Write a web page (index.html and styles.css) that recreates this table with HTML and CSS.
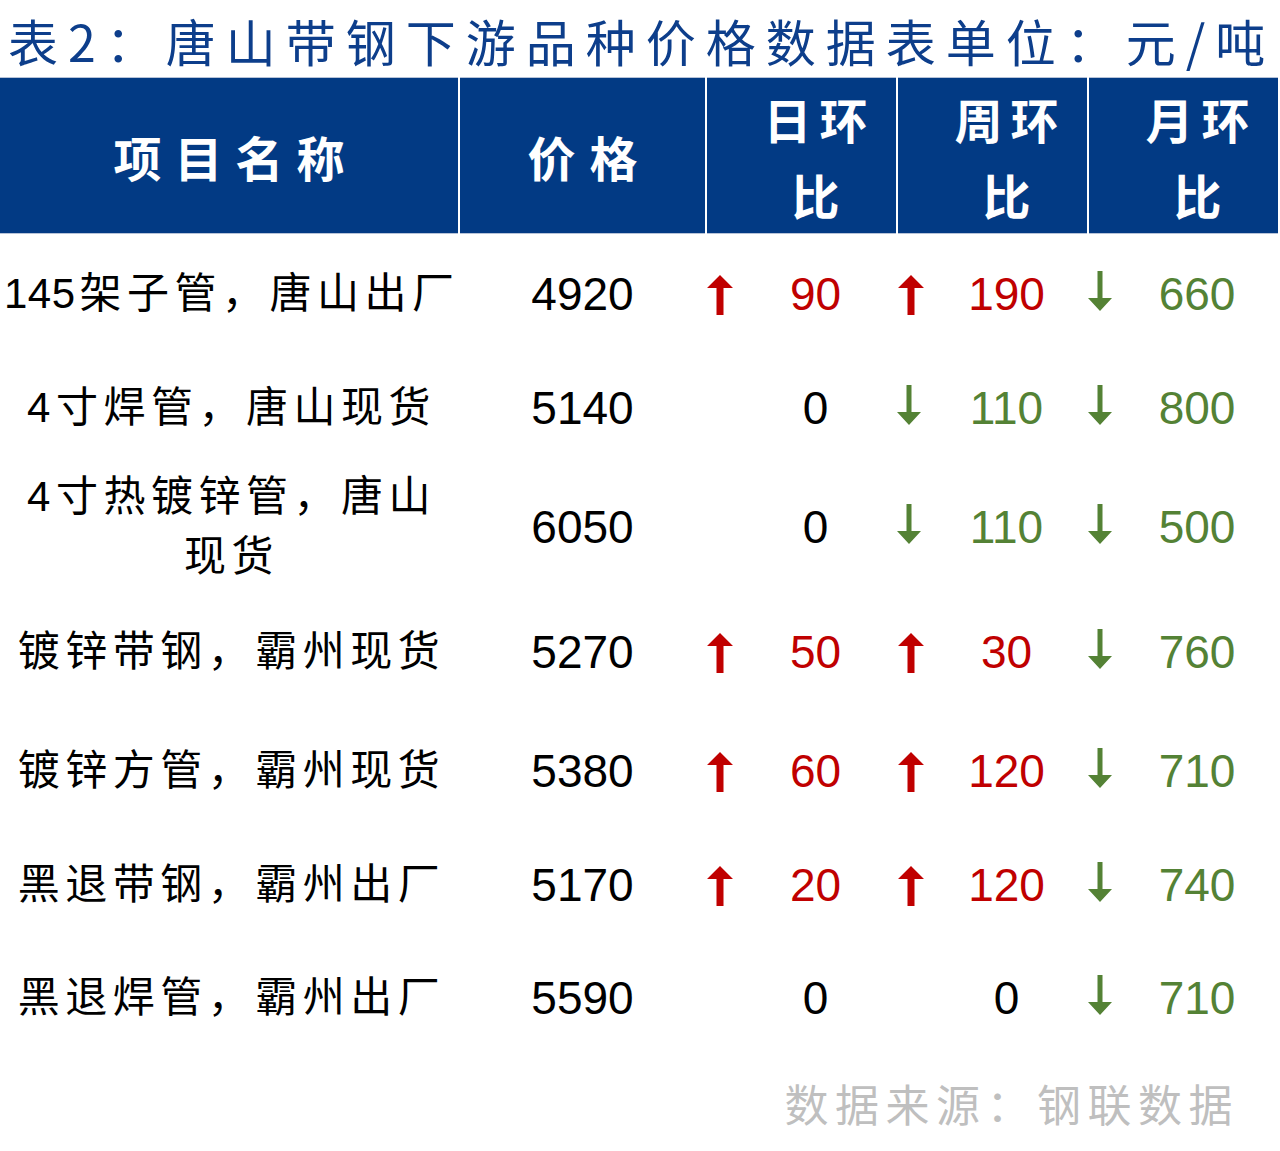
FILE: index.html
```html
<!DOCTYPE html>
<html lang="zh-CN">
<head>
<meta charset="utf-8">
<title>表2：唐山带钢下游品种价格数据表</title>
<link rel="stylesheet" href="styles.css">
</head>
<body>
<div class="page">
  <h1 class="title">表2：唐山带钢下游品种价格数据表单位：元/吨</h1>
  <table class="price-table">
    <colgroup>
      <col class="c-name"><col class="c-price"><col class="c-chg"><col class="c-chg"><col class="c-chg-last">
    </colgroup>
    <thead>
      <tr>
        <th class="th-name">项目名称</th>
        <th class="th-price">价格</th>
        <th class="th-chg">日环比</th>
        <th class="th-chg">周环比</th>
        <th class="th-chg">月环比</th>
      </tr>
    </thead>
    <tbody>
      <tr class="r1">
        <td class="name"><span class="tight">145</span>架子管，唐山出厂</td>
        <td class="price">4920</td>
        <td class="chg"><div class="chg-in"><span class="arrow"><svg viewBox="0 0 28 40" width="28" height="40"><path d="M14 0 L27 13 L17.5 13 L17.5 40 L10.5 40 L10.5 13 L1 13 Z" fill="#c00000"/></svg></span><span class="num up">90</span></div></td>
        <td class="chg"><div class="chg-in"><span class="arrow"><svg viewBox="0 0 28 40" width="28" height="40"><path d="M14 0 L27 13 L17.5 13 L17.5 40 L10.5 40 L10.5 13 L1 13 Z" fill="#c00000"/></svg></span><span class="num up">190</span></div></td>
        <td class="chg"><div class="chg-in"><span class="arrow dn"><svg viewBox="0 0 28 40" width="28" height="40"><path d="M9.5 0 L14.5 0 L14.5 27 L24 27 L12 40 L0 27 L9.5 27 Z" fill="#548235"/></svg></span><span class="num down">660</span></div></td>
      </tr>
      <tr class="r2">
        <td class="name">4寸焊管，唐山现货</td>
        <td class="price">5140</td>
        <td class="chg"><div class="chg-in"><span class="arrow"></span><span class="num">0</span></div></td>
        <td class="chg"><div class="chg-in"><span class="arrow dn"><svg viewBox="0 0 28 40" width="28" height="40"><path d="M9.5 0 L14.5 0 L14.5 27 L24 27 L12 40 L0 27 L9.5 27 Z" fill="#548235"/></svg></span><span class="num down">110</span></div></td>
        <td class="chg"><div class="chg-in"><span class="arrow dn"><svg viewBox="0 0 28 40" width="28" height="40"><path d="M9.5 0 L14.5 0 L14.5 27 L24 27 L12 40 L0 27 L9.5 27 Z" fill="#548235"/></svg></span><span class="num down">800</span></div></td>
      </tr>
      <tr class="r3">
        <td class="name">4寸热镀锌管，唐山<br>现货</td>
        <td class="price">6050</td>
        <td class="chg"><div class="chg-in"><span class="arrow"></span><span class="num">0</span></div></td>
        <td class="chg"><div class="chg-in"><span class="arrow dn"><svg viewBox="0 0 28 40" width="28" height="40"><path d="M9.5 0 L14.5 0 L14.5 27 L24 27 L12 40 L0 27 L9.5 27 Z" fill="#548235"/></svg></span><span class="num down">110</span></div></td>
        <td class="chg"><div class="chg-in"><span class="arrow dn"><svg viewBox="0 0 28 40" width="28" height="40"><path d="M9.5 0 L14.5 0 L14.5 27 L24 27 L12 40 L0 27 L9.5 27 Z" fill="#548235"/></svg></span><span class="num down">500</span></div></td>
      </tr>
      <tr class="r4">
        <td class="name">镀锌带钢，霸州现货</td>
        <td class="price">5270</td>
        <td class="chg"><div class="chg-in"><span class="arrow"><svg viewBox="0 0 28 40" width="28" height="40"><path d="M14 0 L27 13 L17.5 13 L17.5 40 L10.5 40 L10.5 13 L1 13 Z" fill="#c00000"/></svg></span><span class="num up">50</span></div></td>
        <td class="chg"><div class="chg-in"><span class="arrow"><svg viewBox="0 0 28 40" width="28" height="40"><path d="M14 0 L27 13 L17.5 13 L17.5 40 L10.5 40 L10.5 13 L1 13 Z" fill="#c00000"/></svg></span><span class="num up">30</span></div></td>
        <td class="chg"><div class="chg-in"><span class="arrow dn"><svg viewBox="0 0 28 40" width="28" height="40"><path d="M9.5 0 L14.5 0 L14.5 27 L24 27 L12 40 L0 27 L9.5 27 Z" fill="#548235"/></svg></span><span class="num down">760</span></div></td>
      </tr>
      <tr class="r5">
        <td class="name">镀锌方管，霸州现货</td>
        <td class="price">5380</td>
        <td class="chg"><div class="chg-in"><span class="arrow"><svg viewBox="0 0 28 40" width="28" height="40"><path d="M14 0 L27 13 L17.5 13 L17.5 40 L10.5 40 L10.5 13 L1 13 Z" fill="#c00000"/></svg></span><span class="num up">60</span></div></td>
        <td class="chg"><div class="chg-in"><span class="arrow"><svg viewBox="0 0 28 40" width="28" height="40"><path d="M14 0 L27 13 L17.5 13 L17.5 40 L10.5 40 L10.5 13 L1 13 Z" fill="#c00000"/></svg></span><span class="num up">120</span></div></td>
        <td class="chg"><div class="chg-in"><span class="arrow dn"><svg viewBox="0 0 28 40" width="28" height="40"><path d="M9.5 0 L14.5 0 L14.5 27 L24 27 L12 40 L0 27 L9.5 27 Z" fill="#548235"/></svg></span><span class="num down">710</span></div></td>
      </tr>
      <tr class="r6">
        <td class="name">黑退带钢，霸州出厂</td>
        <td class="price">5170</td>
        <td class="chg"><div class="chg-in"><span class="arrow"><svg viewBox="0 0 28 40" width="28" height="40"><path d="M14 0 L27 13 L17.5 13 L17.5 40 L10.5 40 L10.5 13 L1 13 Z" fill="#c00000"/></svg></span><span class="num up">20</span></div></td>
        <td class="chg"><div class="chg-in"><span class="arrow"><svg viewBox="0 0 28 40" width="28" height="40"><path d="M14 0 L27 13 L17.5 13 L17.5 40 L10.5 40 L10.5 13 L1 13 Z" fill="#c00000"/></svg></span><span class="num up">120</span></div></td>
        <td class="chg"><div class="chg-in"><span class="arrow dn"><svg viewBox="0 0 28 40" width="28" height="40"><path d="M9.5 0 L14.5 0 L14.5 27 L24 27 L12 40 L0 27 L9.5 27 Z" fill="#548235"/></svg></span><span class="num down">740</span></div></td>
      </tr>
      <tr class="r7">
        <td class="name">黑退焊管，霸州出厂</td>
        <td class="price">5590</td>
        <td class="chg"><div class="chg-in"><span class="arrow"></span><span class="num">0</span></div></td>
        <td class="chg"><div class="chg-in"><span class="arrow"></span><span class="num">0</span></div></td>
        <td class="chg"><div class="chg-in"><span class="arrow dn"><svg viewBox="0 0 28 40" width="28" height="40"><path d="M9.5 0 L14.5 0 L14.5 27 L24 27 L12 40 L0 27 L9.5 27 Z" fill="#548235"/></svg></span><span class="num down">710</span></div></td>
      </tr>
    </tbody>
  </table>
  <div class="source">数据来源：钢联数据</div>
</div>
</body>
</html>
```

FILE: styles.css
```css
html, body {
  margin: 0;
  padding: 0;
  background: #ffffff;
}

body {
  font-family: "Liberation Sans", "Noto Sans CJK SC", sans-serif;
  color: #000;
}

.page {
  width: 1280px;
  height: 1151px;
  overflow: hidden;
}

.title {
  margin: 0;
  height: 77px;
  box-sizing: border-box;
  padding: 4px 0 0 8px;
  font-family: "Noto Sans CJK SC", sans-serif;
  font-weight: 400;
  font-size: 50px;
  line-height: 73px;
  letter-spacing: 10px;
  color: #0d3e8b;
  white-space: nowrap;
}

.price-table {
  width: 1278px;
  border-collapse: collapse;
  table-layout: fixed;
  border-spacing: 0;
}

.c-name { width: 459px; }
.c-price { width: 247px; }
.c-chg { width: 191px; }
.c-chg-last { width: 190px; }

.price-table thead tr {
  height: 156px;
}

.price-table th {
  background: #023a84;
  color: #ffffff;
  font-family: "Noto Sans CJK SC", sans-serif;
  font-weight: 700;
  font-size: 48px;
  line-height: 76px;
  padding: 0;
  border-top: 1px solid #b7c3d8;
  border-bottom: 1px solid #b7c3d8;
  border-left: 2px solid #ffffff;
  text-align: center;
  vertical-align: middle;
}

.price-table th:first-child {
  border-left: 0;
}

.th-name {
  letter-spacing: 13px;
  padding-left: 13px !important;
}

.th-price {
  letter-spacing: 14px;
  padding-left: 14px !important;
}

.th-chg {
  letter-spacing: 8px;
  padding-left: 36px !important;
}

.price-table td {
  padding: 0;
  vertical-align: middle;
}

.r1 { height: 120px; }
.r2 { height: 108px; }
.r3 { height: 130px; }
.r4 { height: 120px; }
.r5 { height: 118px; }
.r6 { height: 110px; }
.r7 { height: 116px; }

.name {
  text-align: center;
  font-size: 42px;
  line-height: 60px;
  letter-spacing: 5.5px;
  padding-left: 4px !important;
  white-space: nowrap;
}

.tight {
  letter-spacing: 0.5px;
  margin-right: 4px;
}

.price {
  text-align: center;
  font-size: 46px;
  line-height: 60px;
}

.chg-in {
  display: flex;
  align-items: center;
}

.arrow {
  flex: 0 0 28px;
  width: 28px;
  height: 40px;
  display: flex;
  margin-top: 2px;
}

.arrow.dn {
  margin-top: -6px;
}

.arrow svg {
  display: block;
}

.num {
  flex: 1 1 auto;
  text-align: center;
  font-size: 46px;
  line-height: 60px;
  color: #000;
}

.num.up {
  color: #c00000;
}

.num.down {
  color: #548235;
}

.source {
  text-align: right;
  padding: 17px 41px 0 0;
  font-family: "Noto Sans CJK SC", sans-serif;
  font-size: 44px;
  line-height: 60px;
  letter-spacing: 6.5px;
  color: #bfbfbf;
}
```
